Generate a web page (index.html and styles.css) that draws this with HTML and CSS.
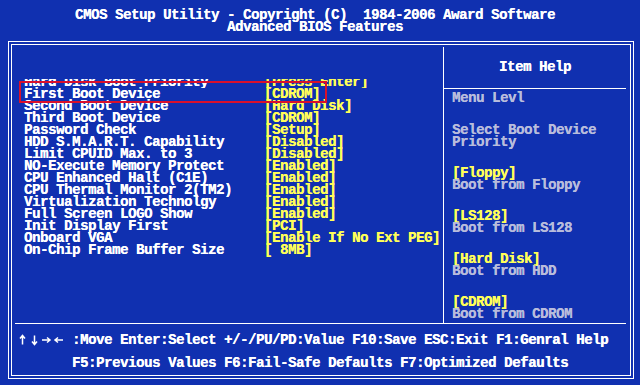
FILE: index.html
```html
<!DOCTYPE html>
<html lang="en">
<head>
    <meta charset="UTF-8">
    <meta name="viewport" content="width=device-width, initial-scale=1.0">
    <title>Advanced BIOS Features</title>
    <link rel="stylesheet" href="styles.css">
</head>
<body>
    <header class="title">
        <div>CMOS Setup Utility - Copyright (C)  1984-2006 Award Software</div>
        <div>Advanced BIOS Features</div>
    </header>

    <div class="frame">
        <div class="panes">
            <!-- Lista de opciones -->
            <section class="settings">
                <div class="row glitch"><span class="name">Hard Disk Boot Priority</span><span class="value">[Press Enter]</span></div>
                <div class="row"><span class="name">First Boot Device</span><span class="value">[CDROM]</span></div>
                <div class="row"><span class="name">Second Boot Device</span><span class="value">[Hard Disk]</span></div>
                <div class="row"><span class="name">Third Boot Device</span><span class="value">[CDROM]</span></div>
                <div class="row"><span class="name">Password Check</span><span class="value">[Setup]</span></div>
                <div class="row"><span class="name">HDD S.M.A.R.T. Capability</span><span class="value">[Disabled]</span></div>
                <div class="row"><span class="name">Limit CPUID Max. to 3</span><span class="value">[Disabled]</span></div>
                <div class="row"><span class="name">NO-Execute Memory Protect</span><span class="value">[Enabled]</span></div>
                <div class="row"><span class="name">CPU Enhanced Halt (C1E)</span><span class="value">[Enabled]</span></div>
                <div class="row"><span class="name">CPU Thermal Monitor 2(TM2)</span><span class="value">[Enabled]</span></div>
                <div class="row"><span class="name">Virtualization Technolgy</span><span class="value">[Enabled]</span></div>
                <div class="row"><span class="name">Full Screen LOGO Show</span><span class="value">[Enabled]</span></div>
                <div class="row"><span class="name">Init Display First</span><span class="value">[PCI]</span></div>
                <div class="row"><span class="name">Onboard VGA</span><span class="value">[Enable If No Ext PEG]</span></div>
                <div class="row"><span class="name">On-Chip Frame Buffer Size</span><span class="value">[ 8MB]</span></div>
                <div class="mark"></div>
            </section>

            <!-- Ayuda -->
            <aside class="help">
                <div class="help-title">Item Help</div>
                <div class="help-body">
                    <p>Menu Levl</p>
                    <p class="first">Select Boot Device<br>Priority</p>
                    <p><b>[Floppy]</b><br>Boot from Floppy</p>
                    <p><b>[LS128]</b><br>Boot from LS128</p>
                    <p><b>[Hard Disk]</b><br>Boot from HDD</p>
                    <p><b>[CDROM]</b><br>Boot from CDROM</p>
                </div>
            </aside>
        </div>

        <footer class="keys">
            <div><svg class="arrows" width="57" height="12" viewBox="0 0 57 12" aria-label="↑↓→←">
                <g fill="none" stroke="#fff" stroke-width="1.5">
                    <path d="M7.5 1.5V10.5M5 4.5L7.5 1.5L10 4.5"/>
                    <path d="M19.5 1.5V10.5M17 7.5L19.5 10.5L22 7.5"/>
                    <path d="M27 6H35M32 3.5L35 6L32 8.5"/>
                    <path d="M40 6H48M43 3.5L40 6L43 8.5"/>
                </g>
            </svg>:Move Enter:Select +/-/PU/PD:Value F10:Save ESC:Exit F1:Genral Help</div>
            <div class="keys-2">F5:Previous Values F6:Fail-Safe Defaults F7:Optimized Defaults</div>
        </footer>
    </div>
</body>
</html>
```

FILE: styles.css
```css
* {
    box-sizing: border-box;
    margin: 0;
    padding: 0;
}

html, body {
    height: 100%;
    overflow: hidden;
}

body {
    background-color: #1030b0;
    color: #ffffff;
    font-family: 'Liberation Mono', 'DejaVu Sans Mono', monospace;
    font-weight: bold;
    font-size: 14px;
    letter-spacing: -0.4px;
    line-height: 12px;
    text-shadow: 0.3px 0 0 currentColor;
}

.title div,
.name,
.value,
.help-body p,
.keys div {
    white-space: pre;
}

/* Cabecera */
.title {
    height: 41px;
    padding: 9px 10px 0 0;
    text-align: center;
}

/* Marco doble */
.frame {
    width: 626px;
    height: 338px;
    margin-left: 8px;
    padding: 5px 7px 0 6px;
    border: 1px solid #ffffff;
    box-shadow: inset 0 0 0 2px #1030b0, inset 0 0 0 3px #ffffff;
    display: flex;
    flex-direction: column;
}

.panes {
    display: flex;
    height: 276px;
    flex-shrink: 0;
}

.settings {
    position: relative;
    width: 428px;
    padding-top: 29px;
}

.row {
    display: flex;
    height: 12px;
}

.name {
    width: 249px;
    padding-left: 9px;
}

.value {
    color: #ffff58;
}

.glitch {
    clip-path: inset(3px 0 0 0);
}

/* Recuadro rojo */
.mark {
    position: absolute;
    left: 4px;
    top: 34px;
    width: 308px;
    height: 22px;
    border: 2px solid #d8102c;
}

.help {
    flex-grow: 1;
    border-left: 1px solid #ffffff;
}

.help-title {
    height: 42px;
    padding-top: 14px;
    text-align: center;
    border-bottom: 1px solid #ffffff;
}

.help-body {
    padding: 3px 0 0 8px;
    color: #b8bcdc;
}

.help-body p + p {
    margin-top: 19px;
}

.help-body p.first {
    margin-top: 20px;
}

.help-body b {
    color: #ffff58;
}

/* Teclas */
.keys {
    border-top: 1px solid #ffffff;
    padding-top: 10px;
}

.arrows {
    vertical-align: top;
}

.keys-2 {
    margin-top: 11px;
    padding-left: 57px;
}
```
